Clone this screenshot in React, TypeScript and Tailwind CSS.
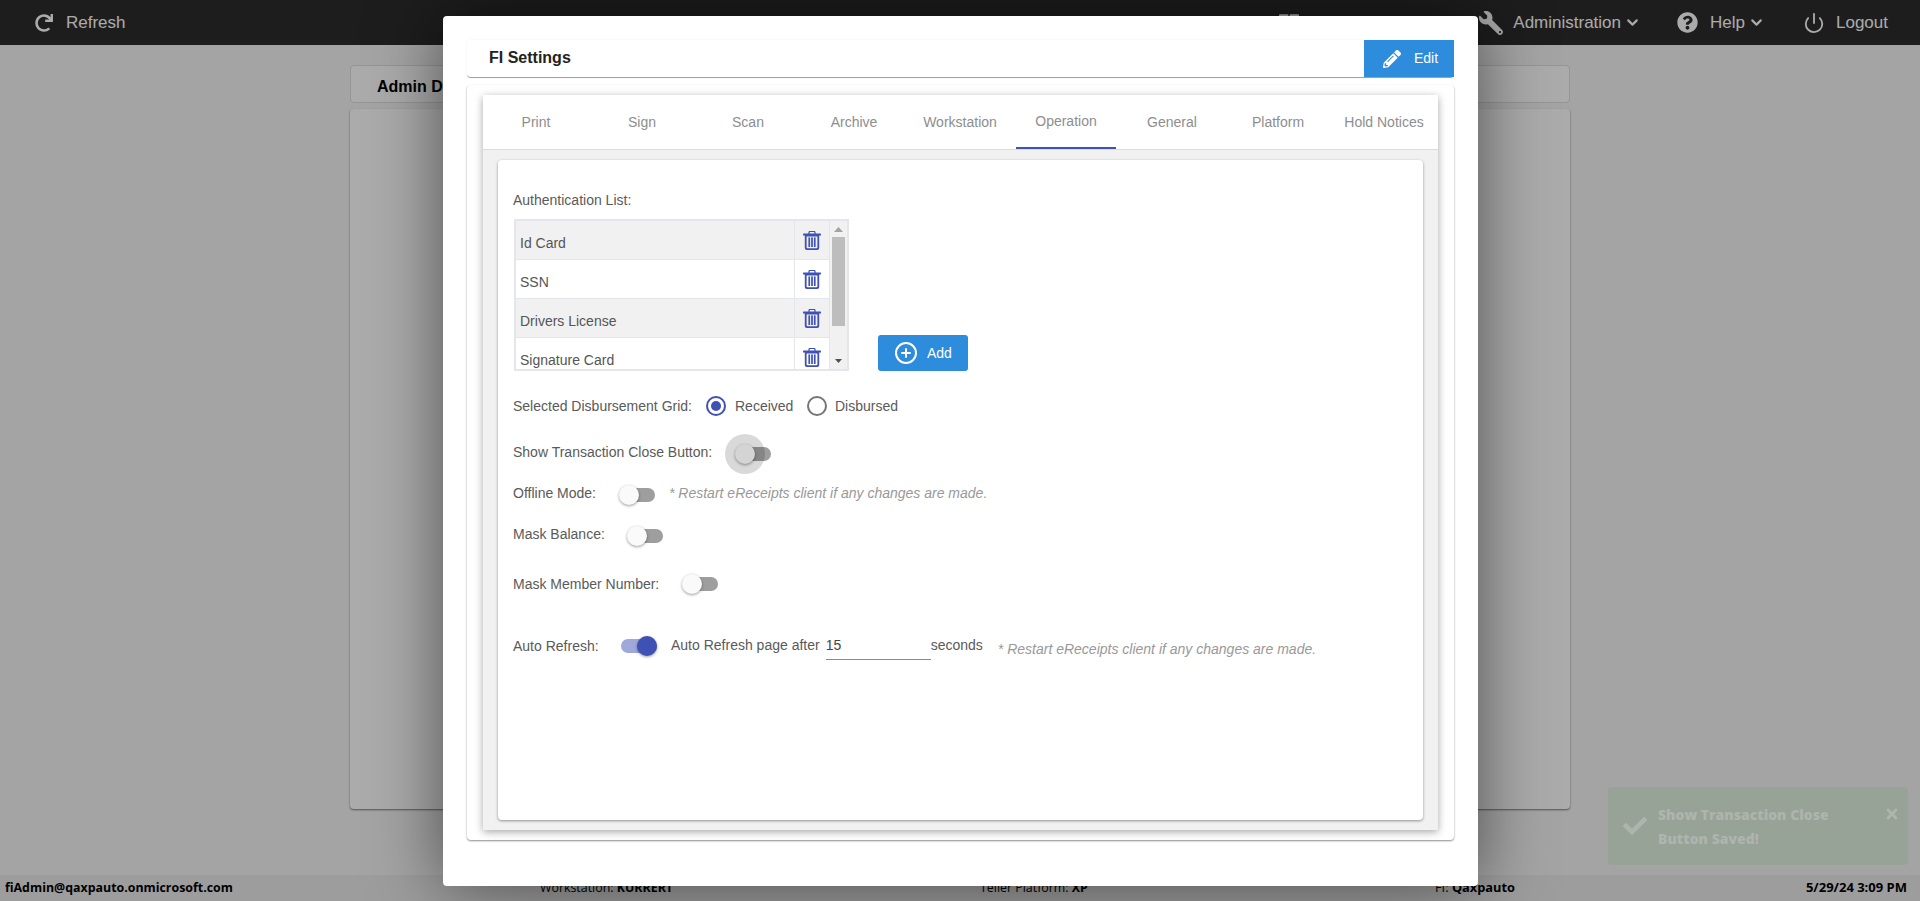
import { FaCheck, FaPencilAlt, FaQuestionCircle, FaRedo, FaThLarge, FaTimes, FaWrench } from 'react-icons/fa';
import { LuChevronDown, LuCirclePlus, LuPower } from 'react-icons/lu';

const tabs = ['Print', 'Sign', 'Scan', 'Archive', 'Workstation', 'Operation', 'General', 'Platform', 'Hold Notices'];
const authItems = ['Id Card', 'SSN', 'Drivers License', 'Signature Card'];

const TrashIcon = () => (
  <svg width="18" height="19" viewBox="0 0 18 19" fill="#3f51b5">
    <path d="M6 3 V1.5 A1 1 0 0 1 7 .5 H11 A1 1 0 0 1 12 1.5 V3" fill="none" stroke="#3f51b5" strokeWidth="1.2" />
    <rect x="0" y="2.6" width="18" height="2" rx=".6" />
    <path d="M1.8 4 H16.2 V17 A2 2 0 0 1 14.2 19 H3.8 A2 2 0 0 1 1.8 17 Z M3.6 5.5 V16.2 A1 1 0 0 0 4.6 17.2 H13.4 A1 1 0 0 0 14.4 16.2 V5.5 Z" fillRule="evenodd" />
    <rect x="5.4" y="6.4" width="1.7" height="9.6" />
    <rect x="8.15" y="6.4" width="1.7" height="9.6" />
    <rect x="10.9" y="6.4" width="1.7" height="9.6" />
  </svg>
);

const Toggle = ({ on = false, halo = false }: { on?: boolean; halo?: boolean }) => (
  <div className="relative h-5 w-9 shrink-0">
    <div className={`absolute top-[3px] right-0 h-3.5 rounded-full ${on ? 'left-0 bg-[#9fa8da]' : 'left-[3px] bg-[#9e9e9e]'}`} />
    <div
      className={`absolute top-0 size-5 rounded-full shadow-[0_1px_3px_rgba(0,0,0,0.4)] ${
        on ? 'right-0 bg-[#3f51b5]' : 'left-0 bg-[#fafafa]'
      }`}
    />
    {halo && <div className="absolute top-[-10px] left-[-10px] size-10 rounded-full bg-black/15" />}
  </div>
);

const Radio = ({ checked = false }: { checked?: boolean }) => (
  <div
    className={`flex size-5 items-center justify-center rounded-full border-2 ${
      checked ? 'border-[#3f51b5]' : 'border-[#757575]'
    }`}
  >
    {checked && <div className="size-2.5 rounded-full bg-[#3f51b5]" />}
  </div>
);

const RestartNote = () => (
  <span className="text-[14px] italic text-[#999]">* Restart eReceipts client if any changes are made.</span>
);

const AuthTable = () => (
  <div className="flex h-[152px] w-[335px] overflow-hidden border-2 border-[#e3e6ea]">
    <div className="h-full w-[314px] overflow-hidden">
      {authItems.map((item, i) => (
        <div key={item} className={`flex h-[39px] border-b border-[#e3e6ea] ${i % 2 === 0 ? 'bg-[#f1f1f1]' : 'bg-white'}`}>
          <div className="w-[279px] border-r border-[#e3e6ea] pl-1 pt-3 text-[14px] leading-5 text-[#555]">{item}</div>
          <div className="flex w-[35px] items-center justify-center border-r border-[#e3e6ea]">
            <TrashIcon />
          </div>
        </div>
      ))}
    </div>
    <div className="flex w-[17px] flex-col items-center bg-[#f1f1f1] px-[2px]">
      <svg width="9" height="16" viewBox="0 0 9 16" className="shrink-0">
        <path d="M0 11 L4.5 6 L9 11 Z" fill="#a3a3a3" />
      </svg>
      <div className="h-[89px] w-[13px] shrink-0 bg-[#bdbdbd]" />
      <svg width="9" height="43" viewBox="0 0 9 43" className="shrink-0">
        <path d="M1 33 L8 33 L4.5 37 Z" fill="#505050" />
      </svg>
    </div>
  </div>
);

const SettingsPanel = () => (
  <div className="h-[660px] rounded bg-white px-4 pt-[30px] text-[14px] text-[#5a5a5a] shadow-[0_1px_3px_rgba(0,0,0,0.4)]">
    <div className="-ml-px leading-5">Authentication List:</div>
    <div className="mt-[9px] flex items-end">
      <AuthTable />
      <button className="ml-[29px] flex h-9 w-[90px] items-center rounded-[3px] bg-[#2d8cdc] pl-[16px] text-white">
        <LuCirclePlus className="size-[24px]" strokeWidth={2} />
        <span className="ml-[9px] font-medium">Add</span>
      </button>
    </div>
    <div className="mt-[23px] -ml-px flex h-6 items-center">
      <span className="w-[193px]">Selected Disbursement Grid:</span>
      <Radio checked />
      <span className="ml-[9px] w-[72px]">Received</span>
      <Radio />
      <span className="ml-2">Disbursed</span>
    </div>
    <div className="mt-[15px] -ml-px flex h-10 items-center">
      <span className="w-[222px] -translate-y-px">Show Transaction Close Button:</span>
      <div className="mt-[2px]">
        <Toggle halo />
      </div>
    </div>
    <div className="mt-[8px] -ml-px flex h-6 items-center">
      <span className="w-[106px]">Offline Mode:</span>
      <div className="mt-[3px]">
        <Toggle />
      </div>
      <span className="ml-[14px]">
        <RestartNote />
      </span>
    </div>
    <div className="mt-[17px] -ml-px flex h-6 items-center">
      <span className="w-[114px]">Mask Balance:</span>
      <div className="mt-[3px]">
        <Toggle />
      </div>
    </div>
    <div className="mt-[26px] -ml-px flex h-6 items-center">
      <span className="w-[169px]">Mask Member Number:</span>
      <Toggle />
    </div>
    <div className="mt-[38px] -ml-px flex h-6 items-center">
      <span className="w-[108px]">Auto Refresh:</span>
      <Toggle on />
      <span className="ml-[14px] -translate-y-px">Auto Refresh page after</span>
      <div className="ml-[6px] mt-[2px] h-[26px] w-[105px] border-b border-[#8a8a8a] leading-[22px] text-[#444]">15</div>
      <span className="-translate-y-px">seconds</span>
      <span className="ml-[15px] translate-y-[3px]">
        <RestartNote />
      </span>
    </div>
  </div>
);

const Modal = () => (
  <div className="absolute top-4 left-[443px] h-[870px] w-[1035px] rounded bg-white px-6 pt-6 shadow-[0_0_70px_rgba(0,0,0,0.55)]">
    <div className="flex h-[38px] items-start justify-between rounded border-b border-[#a0a0a0] bg-white pl-[22px] shadow-[0_0_2px_rgba(0,0,0,0.08)]">
      <span className="mt-[6px] text-[16px] font-bold leading-6 text-[#222]">FI Settings</span>
      <button className="flex h-[37px] w-[90px] items-center bg-[#2d8cdc] pl-[19px] text-[14px] text-white">
        <FaPencilAlt className="size-[18px]" />
        <span className="ml-[13px]">Edit</span>
      </button>
    </div>
    <div className="mt-[7px] h-[755px] rounded bg-white px-4 pt-2.5 shadow-[0_1px_2px_rgba(0,0,0,0.45)]">
      <div className="h-[735px] w-[955px] bg-[#f1f1f1] shadow-[0_2px_8px_rgba(0,0,0,0.35)]">
        <div className="flex h-[55px] border-b border-[#dcdcdc] bg-white">
          {tabs.map(tab => (
            <div key={tab} className="w-[106px] px-[3px]">
              <div
                className={`flex h-full items-center justify-center pt-px text-[14px] text-[#8e8e8e] ${
                  tab === 'Operation' ? 'border-b-2 border-[#3f51b5]' : ''
                }`}
              >
                {tab}
              </div>
            </div>
          ))}
        </div>
        <div className="px-[15px] pt-[10px]">
          <SettingsPanel />
        </div>
      </div>
    </div>
  </div>
);

const TopBar = () => (
  <header className="flex h-[45px] items-center justify-between bg-[#2c2c2c] pl-[35px] pr-[32px] text-[17px] text-white">
    <div className="flex items-center">
      <FaRedo className="size-[18px]" />
      <span className="ml-[13px]">Refresh</span>
    </div>
    <div className="flex items-center">
      <FaThLarge className="size-5" />
      <FaWrench className="ml-[180px] size-[24px] -scale-x-100" />
      <span className="ml-[10px]">Administration</span>
      <LuChevronDown className="ml-[3px] size-[17px]" strokeWidth={3} />
      <FaQuestionCircle className="ml-[36px] size-[21px]" />
      <span className="ml-[12px]">Help</span>
      <LuChevronDown className="ml-[3px] size-[17px]" strokeWidth={3} />
      <LuPower className="ml-[38px] size-[22px]" strokeWidth={2} />
      <span className="ml-[11px]">Logout</span>
    </div>
  </header>
);

const StatusBar = () => (
  <footer className="flex h-[26px] items-center bg-[#eaeaea] pl-[5px] pr-[13px] text-[12.4px] text-black [font-family:'Open_Sans',sans-serif]">
    <span className="w-[535px] font-bold">fiAdmin@qaxpauto.onmicrosoft.com</span>
    <span className="w-[440px]">
      Workstation: <b className="font-bold">KURRERT</b>
    </span>
    <span className="w-[455px]">
      Teller Platform: <b className="font-bold">XP</b>
    </span>
    <span className="text-[12.8px]">
      FI: <b className="font-bold">Qaxpauto</b>
    </span>
    <span className="ml-auto text-[13px] font-bold">5/29/24 3:09 PM</span>
  </footer>
);

const Toast = () => (
  <div className="absolute top-[787px] left-[1608px] flex h-[78px] w-[300px] rounded bg-[#96a396] pl-[15px] pr-[8px] text-[#aeb4ae] [font-family:'Open_Sans',sans-serif]">
    <FaCheck className="mt-[27px] size-6 shrink-0" />
    <div className="ml-[11px] mt-4 w-[200px] text-[14px] font-extrabold leading-6">Show Transaction Close Button Saved!</div>
    <FaTimes className="ml-auto mt-[19px] size-4" />
  </div>
);

export default function App() {
  return (
    <div className="relative flex h-[901px] flex-col overflow-hidden bg-[#f5f5f5] [font-family:'Liberation_Sans',Arial,sans-serif]">
      <TopBar />
      <main className="mx-auto flex w-[1220px] flex-1 flex-col gap-1.5 pt-5">
        <div className="h-[38px] rounded border border-[#dedede] bg-white pl-[26px] text-[16px] font-bold leading-[42px] text-black">
          Admin Dashboard
        </div>
        <div className="h-[700px] rounded bg-white shadow-[0_1px_2px_rgba(0,0,0,0.5)]" />
      </main>
      <StatusBar />
      <div className="absolute inset-0 bg-black/33" />
      <Toast />
      <Modal />
    </div>
  );
}
